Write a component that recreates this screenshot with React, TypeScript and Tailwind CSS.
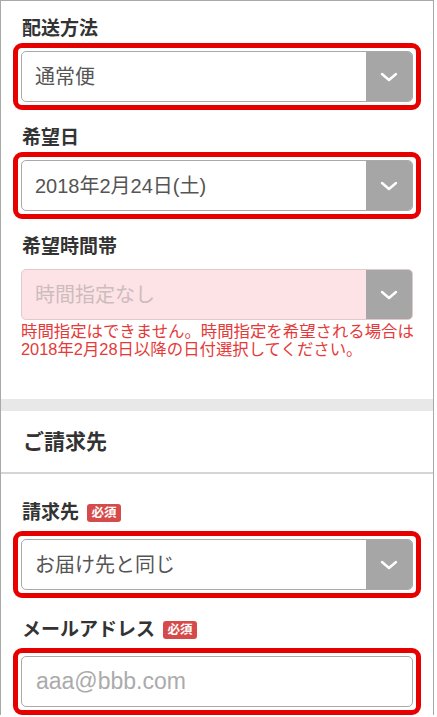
import React from "react";

const font = "font-['Liberation_Sans','Noto_Sans_CJK_JP',sans-serif]";

function Chevron() {
    return (
        <svg width="18" height="10" viewBox="0 0 18 10" fill="none">
            <path d="M2 2 L9 8 L16 2" stroke="white" strokeWidth="2.4" strokeLinecap="round" strokeLinejoin="round" />
        </svg>
    );
}

function Badge() {
    return (
        <span className="ml-[8px] inline-flex h-[18px] w-[34px] items-center justify-center rounded-[3px] bg-[#d64a4a] text-[12.5px] font-bold leading-none text-white">
            必須
        </span>
    );
}

function Label({ text, required }: { text: string; required?: boolean }) {
    return (
        <div className={`flex items-center pl-[9px] text-[19px] font-bold text-[#333] ${required ? "h-[36px]" : "h-[28px]"}`}>
            {text}
            {required && <Badge />}
        </div>
    );
}

function Select({ value, disabled }: { value: string; disabled?: boolean }) {
    return (
        <div
            className={`flex h-[51px] overflow-hidden rounded-[5px] border ${disabled ? "border-[#e2c9cb] bg-[#fde3e5]" : "border-[#a9a9a9] bg-white"
                }`}
        >
            <div className={`flex flex-1 items-center pl-[13px] text-[20px] ${disabled ? "text-[#cdbcbd]" : "text-[#555]"}`}>
                {value}
            </div>
            <div className="flex w-[46px] items-center justify-center bg-[#a6a6a6]">
                <Chevron />
            </div>
        </div>
    );
}

function RedBox({ children }: { children: React.ReactNode }) {
    return <div className="rounded-[9px] border-[5px] border-[#e60000] p-[3px]">{children}</div>;
}

export default function App() {
    return (
        <div className={`h-[717px] w-[437px] overflow-hidden bg-white ${font}`}>
            <div className="w-[434px] border-x border-t border-[#a8a8a8] bg-white">
                <section className="flex flex-col px-[12px] pt-[14px] pb-[41px]">
                    <Label text="配送方法" />
                    <RedBox>
                        <Select value="通常便" />
                    </RedBox>

                    <div className="mt-[14px]">
                        <Label text="希望日" />
                    </div>
                    <RedBox>
                        <Select value="2018年2月24日(土)" />
                    </RedBox>

                    <div className="mt-[14px]">
                        <Label text="希望時間帯" />
                    </div>
                    <div className="mx-[8px] mt-[8px]">
                        <Select value="時間指定なし" disabled />
                        <p className="mt-[2px] whitespace-nowrap text-[16.4px] leading-[18px] text-[#e53a3a]">
                            時間指定はできません。時間指定を希望される場合は
                            <br />
                            2018年2月28日以降の日付選択してください。
                        </p>
                    </div>
                </section>

                <div className="h-[12px] bg-[#e8e8e8]" />

                <div className="flex h-[63px] items-center border-b-2 border-[#d5d5d5] px-[22px] text-[21px] font-bold text-[#333]">
                    ご請求先
                </div>

                <section className="flex flex-col px-[12px] pt-[21px]">
                    <Label text="請求先" required />
                    <RedBox>
                        <Select value="お届け先と同じ" />
                    </RedBox>

                    <div className="mt-[14px]">
                        <Label text="メールアドレス" required />
                    </div>
                    <RedBox>
                        <div className="flex h-[51px] items-center rounded-[5px] border border-[#a9a9a9] bg-white pl-[14px] text-[23px] text-[#ababab]">
                            aaa@bbb.com
                        </div>
                    </RedBox>
                </section>
            </div>
        </div>
    );
}
